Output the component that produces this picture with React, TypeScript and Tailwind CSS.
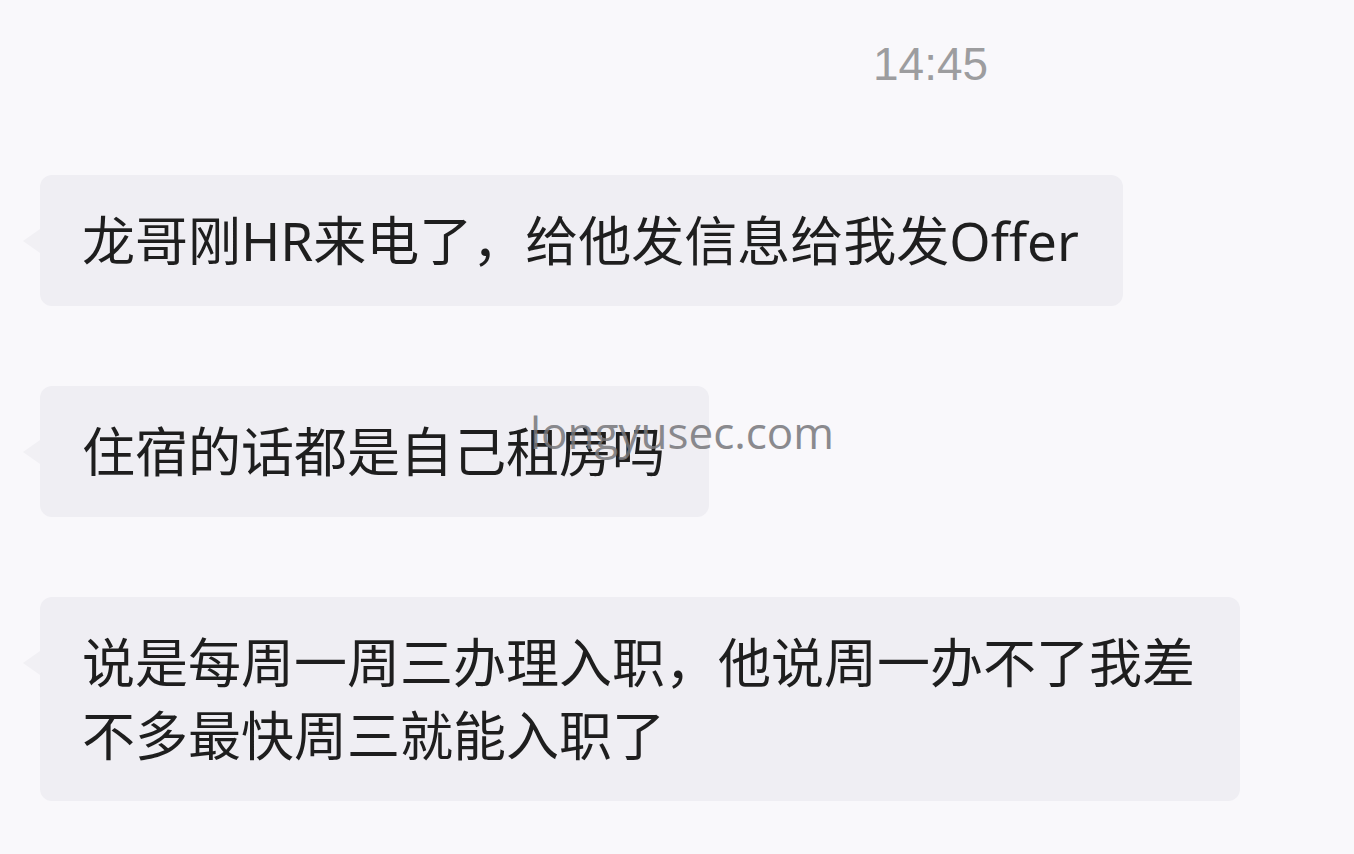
import React from 'react';

type Message = {
  id: number;
  text: string;
};

const messages: Message[] = [
  { id: 1, text: '龙哥刚HR来电了，给他发信息给我发Offer' },
  { id: 2, text: '住宿的话都是自己租房吗' },
  { id: 3, text: '说是每周一周三办理入职，他说周一办不了我差不多最快周三就能入职了' },
];

const Bubble: React.FC<{ text: string }> = ({ text }) => {
  return (
    <div className="relative ml-[40px] w-fit max-w-[1200px]">
      {/* little tail on the left */}
      <div className="absolute left-[-17px] top-[54px] h-0 w-0 border-y-[12px] border-r-[17px] border-y-transparent border-r-[#f1f0f4]" />
      <div className="rounded-[12px] bg-[#efeef3] py-[29px] pl-[42px] pr-[44px] text-[53px] leading-[73px] text-[#1e1e1e]">
        {text}
      </div>
    </div>
  );
};

const App: React.FC = () => {
  return (
    <div
      className="relative h-[854px] w-[1354px] overflow-hidden bg-[#f9f8fb]"
      style={{ fontFamily: '"Noto Sans", "Noto Sans CJK SC", sans-serif' }}
    >
      <div className="pt-[41px]">
        <div className="ml-[873px] font-['Liberation_Sans',sans-serif] text-[46px] leading-none text-[#9d9d9f]">
          14:45
        </div>
      </div>

      <div className="mt-[88px] flex flex-col gap-[80px]">
        {messages.map((m) => (
          <Bubble key={m.id} text={m.text} />
        ))}
      </div>

      {/* watermark */}
      <div className="pointer-events-none absolute left-[530px] top-[410px] font-['Open_Sans',sans-serif] text-[44px] leading-none text-[#77777b] opacity-85">
        longyusec.com
      </div>
    </div>
  );
};

export default App;
